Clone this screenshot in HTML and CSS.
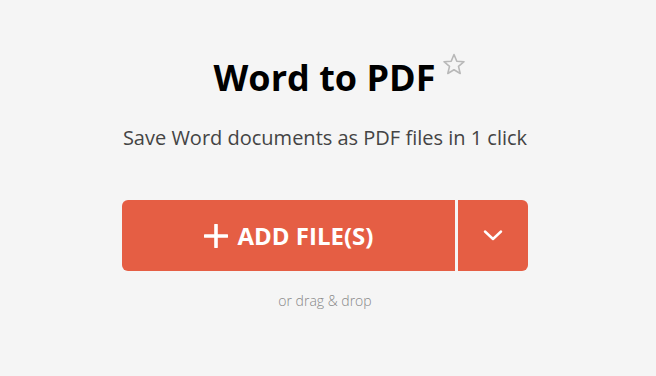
FILE: index.html
```html
<!DOCTYPE html>
<html lang="en">

<head>
    <meta charset="UTF-8">
    <meta name="viewport" content="width=device-width, initial-scale=1.0">
    <title>Word to PDF</title>
    <link rel="stylesheet" href="styles.css">
</head>

<body>
    <!-- tool header -->
    <div class="tool">
        <div class="title-row">
            <h1 class="title">Word to PDF</h1>
            <svg class="star" width="24" height="22" viewBox="0 0 24 22">
                <path d="M12 1.5 L14.8 8.2 L22 8.7 L16.5 13.4 L18.2 20.5 L12 16.7 L5.8 20.5 L7.5 13.4 L2 8.7 L9.2 8.2 Z"
                    fill="none" stroke="#b8b8b8" stroke-width="1.6" stroke-linejoin="round" />
            </svg>
        </div>
        <p class="subtitle">Save Word documents as PDF files in 1 click</p>

        <!-- upload button -->
        <div class="upload">
            <button class="add-btn">
                <svg class="plus" width="24" height="24" viewBox="0 0 24 24">
                    <path d="M12 1 V23 M1 12 H23" stroke="#fff" stroke-width="3.6" stroke-linecap="round" />
                </svg>
                ADD FILE(S)
            </button>
            <button class="more-btn">
                <svg width="20" height="11" viewBox="0 0 20 11">
                    <path d="M2 1.5 L10 9 L18 1.5" fill="none" stroke="#fff" stroke-width="2.4"
                        stroke-linecap="round" stroke-linejoin="round" />
                </svg>
            </button>
        </div>
        <p class="hint">or drag &amp; drop</p>
    </div>
</body>

</html>
```

FILE: styles.css
```css
/* page */
body {
    margin: 0;
    background-color: #f5f5f5;
    font-family: "Open Sans", "Liberation Sans", sans-serif;
}

.tool {
    display: flex;
    flex-direction: column;
    align-items: center;
    padding: 50px 6px 0 0;
}

/* title */
.title-row {
    display: flex;
    align-items: flex-start;
    padding-left: 30px;
}

.title {
    margin: 0;
    font-size: 36px;
    font-weight: 700;
    line-height: 56px;
    color: #000;
}

.star {
    margin-left: 7px;
    margin-top: 3px;
}

.subtitle {
    margin: 18px 0 0;
    font-size: 20px;
    line-height: 28px;
    color: #444;
}

/* upload button */
.upload {
    display: flex;
    margin-top: 48px;
    width: 406px;
    height: 71px;
}

.upload button {
    border: none;
    background-color: #e55e44;
    color: #fff;
    cursor: pointer;
    font-family: inherit;
}

.add-btn {
    flex: 1;
    display: flex;
    align-items: center;
    justify-content: center;
    gap: 10px;
    border-radius: 6px 0 0 6px;
    font-size: 24px;
    font-weight: 700;
    margin-right: 3px;
}

.more-btn {
    width: 70px;
    display: flex;
    align-items: center;
    justify-content: center;
    border-radius: 0 6px 6px 0;
}

.hint {
    margin: 20px 0 0;
    font-size: 14px;
    font-weight: 300;
    color: #888;
}
```
